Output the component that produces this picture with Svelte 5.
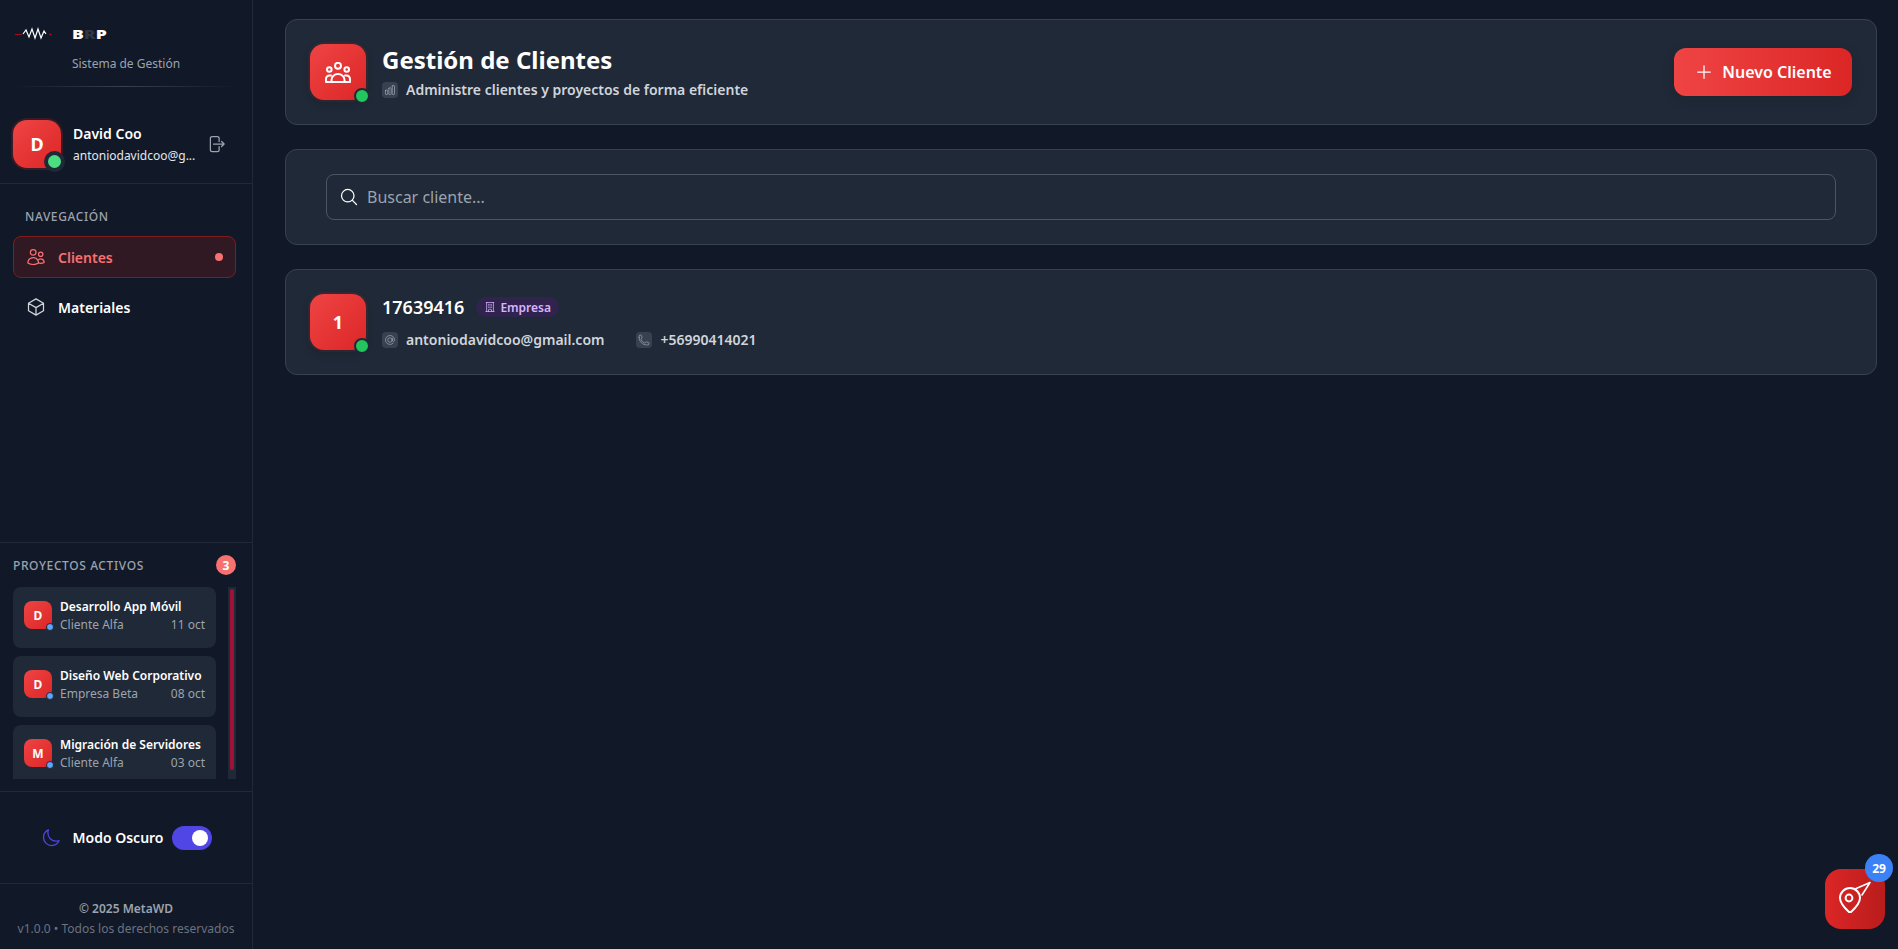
<script>
  const hi = {
    users: 'M15 19.128a9.38 9.38 0 002.625.372 9.337 9.337 0 004.121-.952 4.125 4.125 0 00-7.533-2.493M15 19.128v-.003c0-1.113-.285-2.16-.786-3.07M15 19.128v.106A12.318 12.318 0 018.624 21c-2.331 0-4.512-.645-6.374-1.766l-.001-.109a6.375 6.375 0 0111.964-3.07M12 6.375a3.375 3.375 0 11-6.75 0 3.375 3.375 0 016.75 0zm8.25 2.25a2.625 2.625 0 11-5.25 0 2.625 2.625 0 015.25 0z',
    cube: 'M21 7.5l-9-5.25L3 7.5m18 0l-9 5.25m9-5.25v9l-9 5.25M3 7.5l9 5.25M3 7.5v9l9 5.25m0-9v9',
    logout: 'M15.75 9V5.25A2.25 2.25 0 0013.5 3h-6a2.25 2.25 0 00-2.25 2.25v13.5A2.25 2.25 0 007.5 21h6a2.25 2.25 0 002.25-2.25V15m3 0l3-3m0 0l-3-3m3 3H9',
    moon: 'M21.752 15.002A9.718 9.718 0 0118 15.75c-5.385 0-9.75-4.365-9.75-9.75 0-1.33.266-2.597.748-3.752A9.753 9.753 0 003 11.25C3 16.635 7.365 21 12.75 21a9.753 9.753 0 009.002-5.998z',
    search: 'M21 21l-5.197-5.197m0 0A7.5 7.5 0 105.196 5.196a7.5 7.5 0 0010.607 10.607z',
    plus: 'M12 4.5v15m7.5-7.5h-15',
    at: 'M16.5 12a4.5 4.5 0 11-9 0 4.5 4.5 0 019 0zm0 0c0 1.657 1.007 3 2.25 3S21 13.657 21 12a9 9 0 10-2.636 6.364M16.5 12V8.25',
    phone: 'M2.25 6.75c0 8.284 6.716 15 15 15h2.25a2.25 2.25 0 002.25-2.25v-1.372c0-.516-.351-.966-.852-1.091l-4.423-1.106c-.44-.11-.902.055-1.173.417l-.97 1.293c-.282.376-.769.542-1.21.38a12.035 12.035 0 01-7.143-7.143c-.162-.441.004-.928.38-1.21l1.293-.97c.363-.271.527-.734.417-1.173L6.963 3.102a1.125 1.125 0 00-1.091-.852H4.5A2.25 2.25 0 002.25 4.5v2.25z',
    building: 'M3.75 21h16.5M4.5 3h15M5.25 3v18m13.5-18v18M9 6.75h1.5m-1.5 3h1.5m-1.5 3h1.5m3-6H15m-1.5 3H15m-1.5 3H15M9 21v-3.375c0-.621.504-1.125 1.125-1.125h3.75c.621 0 1.125.504 1.125 1.125V21',
    chart: 'M3 13.125C3 12.504 3.504 12 4.125 12h2.25c.621 0 1.125.504 1.125 1.125v6.75C7.5 20.496 6.996 21 6.375 21h-2.25A1.125 1.125 0 013 19.875v-6.75zM9.75 8.625c0-.621.504-1.125 1.125-1.125h2.25c.621 0 1.125.504 1.125 1.125v11.25c0 .621-.504 1.125-1.125 1.125h-2.25a1.125 1.125 0 01-1.125-1.125V8.625zM16.5 4.125c0-.621.504-1.125 1.125-1.125h2.25C20.496 3 21 3.504 21 4.125v15.75c0 .621-.504 1.125-1.125 1.125h-2.25a1.125 1.125 0 01-1.125-1.125V4.125z'
  };
  const projects = [
    { l: 'D', name: 'Desarrollo App Móvil', client: 'Cliente Alfa', date: '11 oct' },
    { l: 'D', name: 'Diseño Web Corporativo', client: 'Empresa Beta', date: '08 oct' },
    { l: 'M', name: 'Migración de Servidores', client: 'Cliente Alfa', date: '03 oct' }
  ];
</script>

{#snippet icon(d, cls)}
  <svg class={cls} viewBox="0 0 24 24" fill="none" stroke="currentColor" stroke-width="1.5" stroke-linecap="round" stroke-linejoin="round"><path {d} /></svg>
{/snippet}

<div class="app">
  <aside class="sidebar">
    <div class="brand">
      <div class="logo">
        <svg class="wave" viewBox="0 0 37 16" fill="none">
          <path d="M0 8.500h7" stroke="#a3101c" stroke-width="1" />
          <path d="M8 8l3-4 3 7 3-8 3 9 3-9 3 9 3-7 2 3" stroke="#fff" stroke-width="1.200" />
          <path d="M34.500 8.500h2" stroke="#c00d1e" stroke-width="1.400" />
        </svg>
        <span class="brp">B<em>R</em>P</span>
      </div>
      <div class="tagline">Sistema de Gestión</div>
      <div class="fade"></div>
    </div>

    <div class="user">
      <div class="uavatar">D<span class="ustatus"></span></div>
      <div class="uinfo">
        <div class="uname">David Coo</div>
        <div class="umail">antoniodavidcoo@g...</div>
      </div>
      {@render icon(hi.logout, 'ulogout')}
    </div>

    <nav class="nav">
      <div class="navtitle">NAVEGACIÓN</div>
      <div class="navitem active">
        {@render icon(hi.users, 'navicon')}
        <span>Clientes</span>
        <i class="dot"></i>
      </div>
      <div class="navitem">
        {@render icon(hi.cube, 'navicon')}
        <span>Materiales</span>
      </div>
    </nav>

    <section class="projects">
      <div class="phead">
        <span>PROYECTOS ACTIVOS</span>
        <b class="pcount">3</b>
      </div>
      <div class="pbody">
        <div class="plist">
          {#each projects as p}
            <div class="pcard">
              <div class="pavatar">{p.l}<i></i></div>
              <div class="ptext">
                <div class="pname">{p.name}</div>
                <div class="pmeta"><span>{p.client}</span><span>{p.date}</span></div>
              </div>
            </div>
          {/each}
        </div>
        <div class="track"><div class="thumb"></div></div>
      </div>
    </section>

    <div class="mode">
      {@render icon(hi.moon, 'moon')}
      <span>Modo Oscuro</span>
      <div class="toggle"><i></i></div>
    </div>

    <footer class="foot">
      <div class="copy">© 2025 MetaWD</div>
      <div class="ver">v1.0.0 • Todos los derechos reservados</div>
    </footer>
  </aside>

  <main class="main">
    <header class="card head">
      <div class="bigav">
        <svg class="group" viewBox="0 0 26 21" fill="none" stroke="currentColor" stroke-width="2" stroke-linecap="round" stroke-linejoin="round">
          <circle cx="13" cy="3.800" r="3" />
          <circle cx="4.300" cy="7.500" r="2.300" />
          <circle cx="21.700" cy="7.500" r="2.300" />
          <path d="M1 20v-3a3.500 3.500 0 0 1 3.500-3.500h1.500M25 20v-3a3.500 3.500 0 0 0-3.500-3.500H20M6.500 20v-2c0-3.500 3-6 6.500-6s6.500 2.500 6.500 6v2M1 20h24" />
        </svg>
        <i class="online"></i>
      </div>
      <div class="htext">
        <h1>Gestión de Clientes</h1>
        <div class="sub">
          <span class="chip">{@render icon(hi.chart, 'chipicon')}</span>
          Administre clientes y proyectos de forma eficiente
        </div>
      </div>
      <button class="newbtn">{@render icon(hi.plus, 'plus')}Nuevo Cliente</button>
    </header>

    <div class="card searchcard">
      <div class="search">
        {@render icon(hi.search, 'sicon')}
        <span>Buscar cliente...</span>
      </div>
    </div>

    <div class="card client">
      <div class="bigav num">1<i class="online"></i></div>
      <div class="htext">
        <div class="cline">
          <span class="cid">17639416</span>
          <span class="tag">{@render icon(hi.building, 'tagicon')}Empresa</span>
        </div>
        <div class="sub contacts">
          <span class="contact"><span class="chip">{@render icon(hi.at, 'chipicon')}</span>antoniodavidcoo@gmail.com</span>
          <span class="contact"><span class="chip">{@render icon(hi.phone, 'chipicon')}</span>+56990414021</span>
        </div>
      </div>
    </div>
  </main>

  <div class="fab">
    <svg class="pin" viewBox="0 0 40 40" fill="none" stroke="#fff" stroke-width="2" stroke-linejoin="round" stroke-linecap="round">
      <path d="M14 34c-6-5.500-9-9.500-9-14a10 10 0 0 1 20 0c0 4.500-3 8.500-9 14z" transform="translate(-1 -2)" />
      <circle cx="13" cy="18" r="3.400" />
      <path d="M19 9l15-6.500-8 12.500" stroke-width="1.600" />
    </svg>
    <span class="fabcount">29</span>
  </div>
</div>

<style>
  :global(body) {
    margin: 0;
    background: #111827;
    font-family: "Noto Sans", "Open Sans", sans-serif;
    color: #fff;
  }
  .app {
    display: flex;
    height: 949px;
    overflow: hidden;
    position: relative;
    background: #111827;
  }
  .sidebar {
    width: 252px;
    flex: none;
    border-right: 1px solid #1f2937;
    background: #111827;
    display: flex;
    flex-direction: column;
  }
  .brand {
    height: 87px;
    position: relative;
    padding-top: 24px;
    box-sizing: border-box;
    flex: none;
  }
  .logo {
    display: flex;
    align-items: center;
    height: 20px;
    padding-left: 15px;
  }
  .wave { width: 37px; height: 16px; flex: none; }
  .brp {
    margin-left: 20px;
    font-size: 13px;
    line-height: 16px;
    font-weight: 900;
    transform: scaleX(1.35);
    transform-origin: left center;
    color: #fff;
  }
  .brp em { font-style: normal; color: #2f3742; }
  .tagline {
    text-align: center;
    font-size: 12px;
    line-height: 16px;
    color: #9ca3af;
    margin-top: 12px;
  }
  .fade {
    position: absolute;
    left: 13px;
    right: 16px;
    bottom: 0;
    height: 1px;
    background: linear-gradient(90deg, transparent, #374151 50%, transparent);
  }
  .user {
    height: 97px;
    box-sizing: border-box;
    border-bottom: 1px solid #1f2937;
    display: flex;
    align-items: center;
    padding: 17px 0 0 13px;
    flex: none;
  }
  .uavatar {
    width: 48px;
    height: 48px;
    border-radius: 14px;
    background: linear-gradient(135deg, #ef4444, #dc2626);
    box-shadow: 0 0 0 2px rgba(220, 38, 38, 0.2);
    display: flex;
    align-items: center;
    justify-content: center;
    font-size: 18px;
    font-weight: 700;
    position: relative;
    flex: none;
  }
  .ustatus {
    position: absolute;
    right: -4px;
    bottom: -4px;
    width: 13px;
    height: 13px;
    border-radius: 50%;
    background: #4ade80;
    border: 4px solid #1f2937;
  }
  .uinfo { margin-left: 12px; width: 125px; }
  .uname { font-size: 14px; line-height: 20px; font-weight: 600; color: #fff; }
  .umail { font-size: 12px; line-height: 16px; color: #e5e7eb; margin-top: 4px; }
  .ulogout { width: 20px; height: 20px; color: #9ca3af; margin-left: 8px; flex: none; }

  .nav { padding: 25px 16px 0 13px; flex: 1; min-height: 0; }
  .navtitle {
    font-size: 12px;
    line-height: 16px;
    font-weight: 500;
    letter-spacing: 0.6px;
    color: #9ca3af;
    padding-left: 12px;
    margin-bottom: 11px;
  }
  .navitem {
    height: 42px;
    box-sizing: border-box;
    border: 1px solid transparent;
    border-radius: 8px;
    display: flex;
    align-items: center;
    padding: 0 12px;
    font-size: 14px;
    font-weight: 600;
    color: #fff;
    margin-bottom: 8px;
  }
  .navitem.active {
    background: rgba(127, 29, 29, 0.3);
    border-color: #7f1d1d;
    color: #f87171;
  }
  .navicon { width: 20px; height: 20px; margin-right: 12px; color: #d1d5db; flex: none; }
  .active .navicon { color: #f87171; }
  .dot { margin-left: auto; width: 8px; height: 8px; border-radius: 50%; background: #f87171; }

  .projects {
    border-top: 1px solid #1f2937;
    border-bottom: 1px solid #1f2937;
    height: 250px;
    box-sizing: border-box;
    padding: 12px 16px 12px 13px;
    flex: none;
  }
  .phead {
    display: flex;
    justify-content: space-between;
    align-items: center;
    height: 20px;
    font-size: 12px;
    font-weight: 500;
    letter-spacing: 0.6px;
    color: #9ca3af;
    margin-bottom: 12px;
  }
  .pcount {
    width: 20px;
    height: 20px;
    border-radius: 50%;
    background: #f87171;
    color: #fff;
    font-size: 12px;
    font-weight: 700;
    display: flex;
    align-items: center;
    justify-content: center;
    letter-spacing: 0;
  }
  .pbody { display: flex; height: 192px; justify-content: space-between; }
  .plist { width: 203px; overflow: hidden; }
  .pcard {
    height: 61px;
    border-radius: 8px;
    background: #1f2937;
    box-sizing: border-box;
    padding: 14px 11px;
    display: flex;
    margin-bottom: 8px;
  }
  .pavatar {
    width: 28px;
    height: 28px;
    border-radius: 8px;
    background: linear-gradient(135deg, #ef4444, #dc2626);
    font-size: 12px;
    font-weight: 700;
    display: flex;
    align-items: center;
    justify-content: center;
    position: relative;
    flex: none;
    margin-right: 8px;
  }
  .pavatar i {
    position: absolute;
    right: -2px;
    bottom: -2px;
    width: 6px;
    height: 6px;
    border-radius: 50%;
    background: #60a5fa;
    border: 1px solid #1f2937;
  }
  .ptext { flex: 1; min-width: 0; margin-top: -2px; }
  .pname { font-size: 12px; line-height: 16px; font-weight: 600; color: #fff; white-space: nowrap; }
  .pmeta {
    display: flex;
    justify-content: space-between;
    font-size: 12px;
    line-height: 16px;
    color: #9ca3af;
    margin-top: 2px;
  }
  .track { width: 8px; background: #1f2937; padding: 2px; box-sizing: border-box; }
  .thumb { height: 181px; border-radius: 2px; background: #9f1239; }

  .mode {
    height: 92px;
    box-sizing: border-box;
    border-bottom: 1px solid #1f2937;
    display: flex;
    align-items: center;
    justify-content: center;
    font-size: 14px;
    font-weight: 600;
    color: #fff;
    flex: none;
  }
  .moon { width: 20px; height: 20px; color: #4f46e5; margin-right: 12px; }
  .toggle {
    width: 40px;
    height: 24px;
    border-radius: 12px;
    background: #4f46e5;
    margin-left: 8px;
    position: relative;
  }
  .toggle i {
    position: absolute;
    right: 4px;
    top: 4px;
    width: 16px;
    height: 16px;
    border-radius: 50%;
    background: #fff;
  }
  .foot {
    height: 65px;
    box-sizing: border-box;
    padding-top: 17px;
    text-align: center;
    flex: none;
  }
  .copy { font-size: 12px; line-height: 16px; font-weight: 600; color: #9ca3af; }
  .ver { font-size: 12px; line-height: 16px; color: #6b7280; margin-top: 4px; }

  .main {
    flex: 1;
    min-width: 0;
    padding: 19px 21px 0 32px;
    box-sizing: border-box;
    display: flex;
    flex-direction: column;
    gap: 24px;
  }
  .card {
    background: #1f2937;
    border: 1px solid #374151;
    border-radius: 12px;
    box-sizing: border-box;
  }
  .head, .client {
    height: 106px;
    display: flex;
    align-items: center;
    padding: 0 24px;
  }
  .bigav {
    width: 56px;
    height: 56px;
    border-radius: 14px;
    background: linear-gradient(135deg, #ef4444, #dc2626);
    box-shadow: 0 0 0 2px rgba(220, 38, 38, 0.12), 0 4px 10px rgba(0, 0, 0, 0.15);
    display: flex;
    align-items: center;
    justify-content: center;
    position: relative;
    flex: none;
    color: #fff;
  }
  .group { width: 26px; height: 21px; }
  .num { font-size: 18px; font-weight: 700; }
  .online {
    position: absolute;
    right: -4px;
    bottom: -4px;
    width: 12px;
    height: 12px;
    border-radius: 50%;
    background: #22c55e;
    border: 2px solid #1f2937;
  }
  .htext { margin-left: 16px; flex: 1; min-width: 0; }
  h1 { margin: 0; font-size: 24px; line-height: 32px; font-weight: 700; color: #fff; }
  .sub {
    display: flex;
    align-items: center;
    font-size: 14px;
    line-height: 20px;
    font-weight: 600;
    color: #d1d5db;
    margin-top: 4px;
  }
  .chip {
    width: 16px;
    height: 16px;
    border-radius: 4px;
    background: #374151;
    color: #9ca3af;
    display: inline-flex;
    align-items: center;
    justify-content: center;
    margin-right: 8px;
    flex: none;
  }
  .chipicon { width: 12px; height: 12px; }
  .newbtn {
    height: 48px;
    width: 178px;
    border: 0;
    border-radius: 12px;
    background: linear-gradient(90deg, #ef4444, #dc2626);
    color: #fff;
    font-family: inherit;
    font-size: 16px;
    font-weight: 600;
    display: flex;
    align-items: center;
    justify-content: center;
    box-shadow: 0 4px 14px rgba(0, 0, 0, 0.1);
  }
  .plus { width: 20px; height: 20px; margin-right: 8px; }
  .searchcard { height: 96px; padding: 24px 40px; }
  .search {
    height: 46px;
    box-sizing: border-box;
    border: 1px solid #4b5563;
    border-radius: 8px;
    display: flex;
    align-items: center;
    padding: 0 12px;
    font-size: 16px;
    color: #9ca3af;
  }
  .sicon { width: 20px; height: 20px; color: #fff; margin-right: 8px; }
  .cline { display: flex; align-items: center; height: 26px; }
  .cid { font-size: 18px; font-weight: 600; color: #fff; }
  .tag {
    margin-left: 12px;
    height: 20px;
    padding: 0 8px;
    border-radius: 10px;
    background: rgba(88, 28, 135, 0.3);
    color: #d8b4fe;
    font-size: 12px;
    font-weight: 600;
    display: flex;
    align-items: center;
  }
  .tagicon { width: 12px; height: 12px; margin-right: 4px; }
  .contacts { gap: 32px; margin-top: 10px; }
  .contact { display: flex; align-items: center; }
  .fab {
    position: absolute;
    left: 1825px;
    top: 869px;
    width: 60px;
    height: 60px;
    border-radius: 16px;
    background: linear-gradient(90deg, #dc2626, #b91c1c);
    display: flex;
    align-items: center;
    justify-content: center;
  }
  .pin { width: 40px; height: 40px; margin-left: 2px; margin-top: 2px; }
  .fabcount {
    position: absolute;
    right: -8px;
    top: -15px;
    width: 28px;
    height: 28px;
    border-radius: 50%;
    background: #3b82f6;
    font-size: 12px;
    font-weight: 700;
    display: flex;
    align-items: center;
    justify-content: center;
  }
</style>
